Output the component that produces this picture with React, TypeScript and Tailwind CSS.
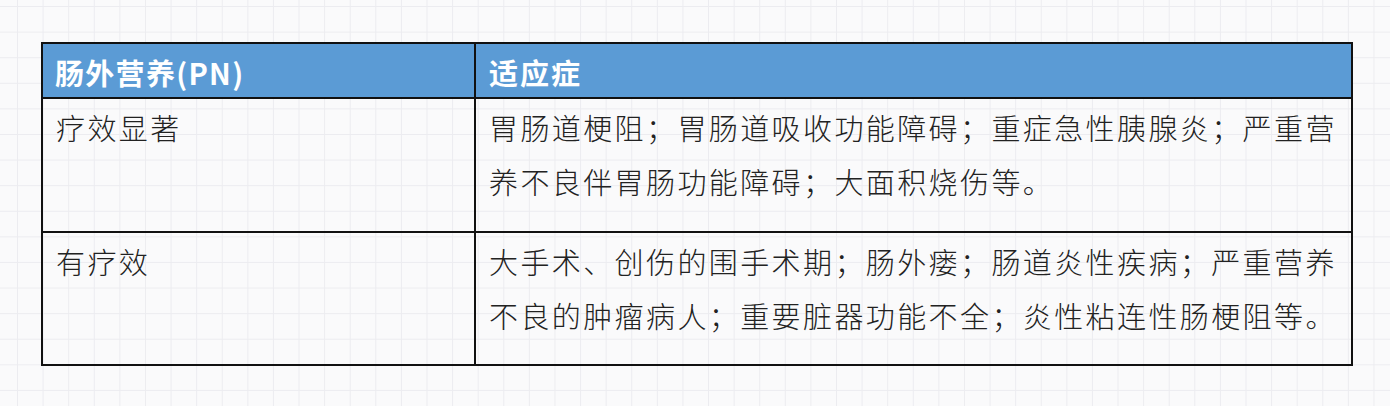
const rows = [
  {
    label: '疗效显著',
    text: '胃肠道梗阻；胃肠道吸收功能障碍；重症急性胰腺炎；严重营养不良伴胃肠功能障碍；大面积烧伤等。',
  },
  {
    label: '有疗效',
    text: '大手术、创伤的围手术期；肠外瘘；肠道炎性疾病；严重营养不良的肿瘤病人；重要脏器功能不全；炎性粘连性肠梗阻等。',
  },
];

const font = { fontFamily: '"Noto Sans CJK SC", "Noto Sans", sans-serif' };

export default function App() {
  return (
    <div
      className="w-[1390px] h-[406px] bg-[#fafafb] pt-[42px] pl-[41px]"
      style={{
        ...font,
        backgroundImage:
          'linear-gradient(0deg, #ececf0 1px, transparent 1px), linear-gradient(90deg, #ececf0 1px, transparent 1px)',
        backgroundSize: '25.6px 25.6px',
        backgroundPosition: '17px 7px',
      }}
    >
      <div className="w-[1312px] border-2 border-[#111] grid grid-cols-[433px_1fr]">
        {/* Header */}
        <div className="h-[55px] bg-[#5b9bd5] border-r-2 border-b-2 border-[#111] pl-[12px] pt-[11px] text-[29px] font-bold text-white leading-[34px] tracking-[1.3px]">
          肠外营养(PN)
        </div>
        <div className="h-[55px] bg-[#5b9bd5] border-b-2 border-[#111] pl-[13px] pt-[11px] text-[29px] font-bold text-white leading-[34px] tracking-[2px]">
          适应症
        </div>

        {rows.map((row, i) => (
          <div key={row.label} className="contents">
            <div
              className={`border-r-2 border-[#111] pl-[13px] pt-[1px] text-[29px] font-light text-[#222] leading-[54px] tracking-[2.4px] ${
                i === 0 ? 'h-[134px] border-b-2' : 'h-[131px]'
              }`}
            >
              {row.label}
            </div>
            <div
              className={`border-[#111] pl-[13px] pr-[8px] pt-[1px] text-[29px] font-light text-[#222] leading-[54px] tracking-[2.4px] ${
                i === 0 ? 'h-[134px] border-b-2' : 'h-[131px]'
              }`}
            >
              {row.text}
            </div>
          </div>
        ))}
      </div>
    </div>
  );
}
